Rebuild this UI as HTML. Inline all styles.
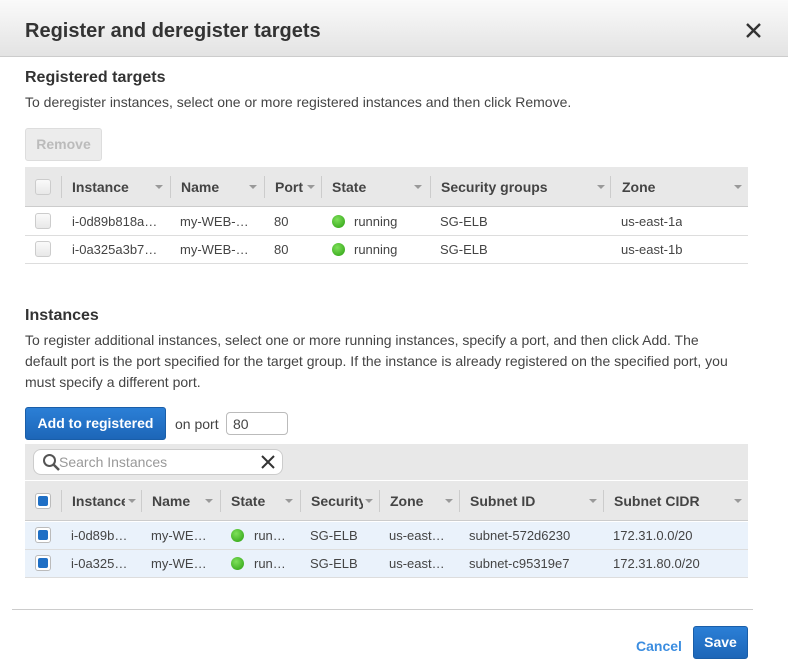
<!DOCTYPE html><html><head><style>
*{box-sizing:border-box;margin:0;padding:0}
body{width:788px;height:665px;background:#fff;font-family:"Liberation Sans",sans-serif;color:#444;position:relative;overflow:hidden;font-size:13px}
.a{position:absolute}
.hdr{left:0;top:0;width:788px;height:57px;background:linear-gradient(#fafafa,#e3e3e3);border-bottom:1px solid #ccc}
h1{position:absolute;left:25px;top:20px;font-size:20px;font-weight:bold;color:#333}
h2{position:absolute;font-size:16px;font-weight:bold;color:#333}
p{position:absolute;font-size:14px;color:#444;line-height:21px}
.th{background:#e8e8e8;height:40px;border-bottom:1px solid #ccc}
.cell{position:absolute;white-space:nowrap;overflow:hidden}
.hc{font-weight:bold;font-size:14px;color:#444;top:12px}
.sep{position:absolute;top:9px;width:1px;height:22px;background:#ccc}
.car{position:absolute;top:18px;width:0;height:0;border-left:4px solid transparent;border-right:4px solid transparent;border-top:4px solid #999}
.row{border-bottom:1px solid #ddd;height:28px}
.rc{top:7px;font-size:13px;color:#444}
.cb{position:absolute;width:16px;height:16px;border:1px solid #ccc;border-radius:3px;background:linear-gradient(#fafafa,#e8e8e8)}
.cbb{position:absolute;width:16px;height:16px;border:1px solid #bbb;border-radius:3px;background:#fff}
.cbb:after{content:"";position:absolute;left:2px;top:2px;width:10px;height:10px;background:#1f6fc5;border-radius:2px}
.dot{display:inline-block;width:13px;height:13px;border-radius:50%;background:radial-gradient(circle at 40% 35%,#7ee05a,#2a9e10);vertical-align:-2px;margin-right:9px}
</style></head><body>
<div class="a hdr"></div>
<h1>Register and deregister targets</h1>
<svg class="a" style="left:746px;top:23px" width="15" height="15"><path d="M1 1L14 14M14 1L1 14" stroke="#333" stroke-width="2.4"/></svg>

<h2 style="left:25px;top:69px">Registered targets</h2>
<p style="left:25px;top:92px">To deregister instances, select one or more registered instances and then click Remove.</p>
<div class="a" style="left:25px;top:128px;width:77px;height:33px;border:1px solid #ddd;border-radius:3px;background:#ececec;color:#bbb;font-weight:bold;font-size:14px;text-align:center;line-height:31px">Remove</div>

<div class="a th" style="left:25px;top:167px;width:723px"></div>
<div class="cb" style="left:35px;top:179px"></div>
<div class="sep" style="left:61px;top:176px"></div>
<div class="cell hc" style="left:72px;top:179px">Instance</div><div class="car" style="left:155px;top:185px"></div>
<div class="sep" style="left:170px;top:176px"></div>
<div class="cell hc" style="left:181px;top:179px">Name</div><div class="car" style="left:249px;top:185px"></div>
<div class="sep" style="left:264px;top:176px"></div>
<div class="cell hc" style="left:275px;top:179px">Port</div><div class="car" style="left:307px;top:185px"></div>
<div class="sep" style="left:321px;top:176px"></div>
<div class="cell hc" style="left:332px;top:179px">State</div><div class="car" style="left:414px;top:185px"></div>
<div class="sep" style="left:430px;top:176px"></div>
<div class="cell hc" style="left:441px;top:179px">Security groups</div><div class="car" style="left:597px;top:185px"></div>
<div class="sep" style="left:610px;top:176px"></div>
<div class="cell hc" style="left:622px;top:179px">Zone</div><div class="car" style="left:734px;top:185px"></div>

<div class="a row" style="left:25px;top:208px;width:723px"></div>
<div class="cb" style="left:35px;top:213px"></div>
<div class="cell rc" style="left:72px;top:214px">i-0d89b818a…</div>
<div class="cell rc" style="left:180px;top:214px">my-WEB-…</div>
<div class="cell rc" style="left:274px;top:214px">80</div>
<div class="cell rc" style="left:332px;top:214px"><span class="dot"></span>running</div>
<div class="cell rc" style="left:440px;top:214px">SG-ELB</div>
<div class="cell rc" style="left:621px;top:214px">us-east-1a</div>
<div class="a row" style="left:25px;top:236px;width:723px"></div>
<div class="cb" style="left:35px;top:241px"></div>
<div class="cell rc" style="left:72px;top:242px">i-0a325a3b7…</div>
<div class="cell rc" style="left:180px;top:242px">my-WEB-…</div>
<div class="cell rc" style="left:274px;top:242px">80</div>
<div class="cell rc" style="left:332px;top:242px"><span class="dot"></span>running</div>
<div class="cell rc" style="left:440px;top:242px">SG-ELB</div>
<div class="cell rc" style="left:621px;top:242px">us-east-1b</div>

<h2 style="left:25px;top:307px">Instances</h2>
<p style="left:25px;top:330px;width:716px">To register additional instances, select one or more running instances, specify a port, and then click Add. The default port is the port specified for the target group. If the instance is already registered on the specified port, you must specify a different port.</p>
<div class="a" style="left:25px;top:407px;width:141px;height:33px;border:1px solid #1a5ea8;border-radius:3px;background:linear-gradient(#2b7fd6,#1d66b8);color:#fff;font-weight:bold;font-size:14px;text-align:center;line-height:31px">Add to registered</div>
<div class="a" style="left:175px;top:416px;font-size:14px">on port</div>
<div class="a" style="left:226px;top:412px;width:62px;height:23px;border:1px solid #bbb;border-radius:4px;font-size:14px;padding:3px 0 0 6px">80</div>

<div class="a" style="left:25px;top:444px;width:723px;height:36px;background:#e8e8e8"></div>
<div class="a" style="left:33px;top:449px;width:250px;height:26px;background:#fff;border:1px solid #ccc;border-radius:8px"></div>
<svg class="a" style="left:42px;top:453px" width="20" height="19"><circle cx="7.5" cy="7.5" r="5.5" fill="none" stroke="#555" stroke-width="2"/><path d="M11.5 11.5L17 17" stroke="#555" stroke-width="2.5"/></svg>
<div class="a" style="left:59px;top:454px;font-size:14px;color:#999">Search Instances</div>
<svg class="a" style="left:261px;top:455px" width="14" height="14"><path d="M1 1L13 13M13 1L1 13" stroke="#333" stroke-width="2"/></svg>

<div class="a th" style="left:25px;top:481px;width:723px"></div>
<div class="cbb" style="left:35px;top:493px"></div>
<div class="sep" style="left:61px;top:490px"></div>
<div class="cell hc" style="left:72px;top:493px;width:53px">Instance</div><div class="car" style="left:128px;top:499px"></div>
<div class="sep" style="left:141px;top:490px"></div>
<div class="cell hc" style="left:152px;top:493px">Name</div><div class="car" style="left:205px;top:499px"></div>
<div class="sep" style="left:220px;top:490px"></div>
<div class="cell hc" style="left:231px;top:493px">State</div><div class="car" style="left:285px;top:499px"></div>
<div class="sep" style="left:300px;top:490px"></div>
<div class="cell hc" style="left:311px;top:493px;width:52px">Security</div><div class="car" style="left:365px;top:499px"></div>
<div class="sep" style="left:379px;top:490px"></div>
<div class="cell hc" style="left:390px;top:493px">Zone</div><div class="car" style="left:445px;top:499px"></div>
<div class="sep" style="left:459px;top:490px"></div>
<div class="cell hc" style="left:470px;top:493px">Subnet ID</div><div class="car" style="left:589px;top:499px"></div>
<div class="sep" style="left:603px;top:490px"></div>
<div class="cell hc" style="left:614px;top:493px">Subnet CIDR</div><div class="car" style="left:734px;top:499px"></div>

<div class="a row" style="left:25px;top:522px;width:723px;background:#eaf2fb"></div>
<div class="cbb" style="left:35px;top:527px"></div>
<div class="cell rc" style="left:71px;top:528px">i-0d89b…</div>
<div class="cell rc" style="left:151px;top:528px">my-WE…</div>
<div class="cell rc" style="left:231px;top:528px"><span class="dot" style="margin-right:10px"></span>run…</div>
<div class="cell rc" style="left:310px;top:528px">SG-ELB</div>
<div class="cell rc" style="left:389px;top:528px">us-east…</div>
<div class="cell rc" style="left:469px;top:528px">subnet-572d6230</div>
<div class="cell rc" style="left:613px;top:528px">172.31.0.0/20</div>
<div class="a row" style="left:25px;top:550px;width:723px;background:#eaf2fb"></div>
<div class="cbb" style="left:35px;top:555px"></div>
<div class="cell rc" style="left:71px;top:556px">i-0a325…</div>
<div class="cell rc" style="left:151px;top:556px">my-WE…</div>
<div class="cell rc" style="left:231px;top:556px"><span class="dot" style="margin-right:10px"></span>run…</div>
<div class="cell rc" style="left:310px;top:556px">SG-ELB</div>
<div class="cell rc" style="left:389px;top:556px">us-east…</div>
<div class="cell rc" style="left:469px;top:556px">subnet-c95319e7</div>
<div class="cell rc" style="left:613px;top:556px">172.31.80.0/20</div>

<div class="a" style="left:12px;top:609px;width:741px;height:1px;background:#ccc"></div>
<div class="a" style="left:636px;top:638px;font-size:14px;font-weight:bold;color:#3b8de0">Cancel</div>
<div class="a" style="left:693px;top:626px;width:55px;height:33px;border:1px solid #1a5ea8;border-radius:3px;background:linear-gradient(#2b7fd6,#1d66b8);color:#fff;font-weight:bold;font-size:14px;text-align:center;line-height:31px">Save</div>
</body></html>
